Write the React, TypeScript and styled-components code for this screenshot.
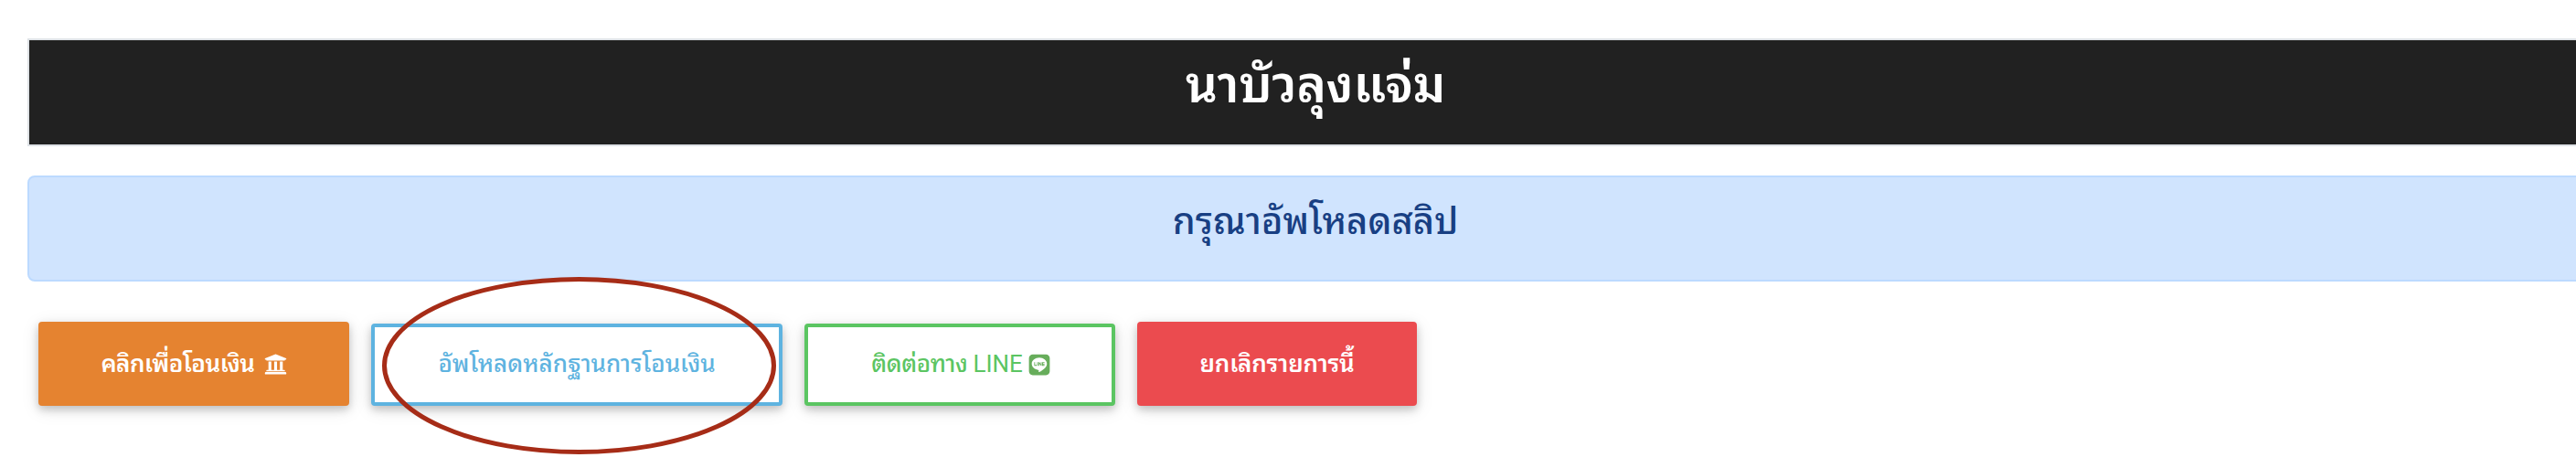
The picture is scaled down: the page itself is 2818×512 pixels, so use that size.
import React from 'react';
import styled, { createGlobalStyle } from 'styled-components';
import { FaUniversity, FaLine } from 'react-icons/fa';

const GlobalStyle = createGlobalStyle`
  * { box-sizing: border-box; }
  body {
    margin: 0;
    background: #fff;
    overflow: hidden;
    font-family: Roboto, "Noto Sans Thai Looped", "Noto Sans Thai", "Noto Sans", sans-serif;
  }
`;

const Page = styled.main`
  position: relative;
  width: 2848px;
  height: 512px;
  padding: 42px 0 0 30px;
`;

const Header = styled.header`
  height: 118px;
  border: 2px solid #dee2e6;
  background: #212121;
  color: #fff;
  text-align: center;
`;

const Title = styled.h1`
  margin: 0;
  font-size: 55px;
  font-weight: 600;
  letter-spacing: -0.2px;
  line-height: 98px;
  white-space: nowrap;
`;

const Alert = styled.section`
  height: 116px;
  margin-top: 32px;
  border: 2px solid #bcdaff;
  border-radius: 8px;
  background: #d0e4fe;
  color: #183f83;
  text-align: center;
`;

const AlertText = styled.h2`
  margin: 0;
  font-size: 40px;
  font-weight: 500;
  line-height: 98px;
  white-space: nowrap;
`;

const Actions = styled.div`
  display: flex;
  align-items: flex-end;
  gap: 24px;
  height: 92px;
  margin: 44px 0 0 12px;
`;

const Label = styled.span<{ $spacing?: number; $weight?: number }>`
  letter-spacing: ${(p) => p.$spacing ?? 0}px;
  font-weight: ${(p) => p.$weight ?? 500};
`;

const Button = styled.button<{ $color: string; $width: number; $outline?: boolean }>`
  display: flex;
  align-items: center;
  justify-content: center;
  width: ${(p) => p.$width}px;
  height: ${(p) => (p.$outline ? 90 : 92)}px;
  padding: 0;
  border: ${(p) => (p.$outline ? `4px solid ${p.$color}` : '0')};
  border-radius: 4px;
  background: ${(p) => (p.$outline ? '#fff' : p.$color)};
  color: ${(p) => (p.$outline ? p.$color : '#fff')};
  box-shadow: 0 4px 10px rgba(0, 0, 0, 0.2), 0 4px 20px rgba(0, 0, 0, 0.1);
  font-family: inherit;
  font-size: 26px;
  white-space: nowrap;

  ${Label} {
    margin-bottom: ${(p) => (p.$outline ? 9 : 6)}px;
  }
`;

const Latin = styled.span`
  letter-spacing: 0;
  font-weight: 400;
`;

const BankIcon = styled(FaUniversity)`
  width: 25px;
  height: 25px;
  margin-left: 10px;
`;

const LineIcon = styled(FaLine)`
  width: 26px;
  height: 26px;
  margin: 0 -3px 0 5px;
  color: #67ad5b;
`;

const Marker = styled.svg`
  position: absolute;
  left: 416px;
  top: 300px;
  pointer-events: none;
`;

export default function App() {
  return (
    <Page>
      <GlobalStyle />
      <Header><Title>นาบัวลุงแจ่ม</Title></Header>
      <Alert><AlertText>กรุณาอัพโหลดสลิป</AlertText></Alert>
      <Actions>
        <Button $color="#e58330" $width={340}><Label $weight={600} $spacing={-0.5}>คลิกเพื่อโอนเงิน</Label><BankIcon /></Button>
        <Button $color="#5eb3e0" $width={450} $outline><Label>อัพโหลดหลักฐานการโอนเงิน</Label></Button>
        <Button $color="#5bc562" $width={340} $outline><Label $spacing={-0.4}>ติดต่อทาง <Latin>LINE</Latin></Label><LineIcon /></Button>
        <Button $color="#eb4b4f" $width={306}><Label $weight={600} $spacing={-0.2}>ยกเลิกรายการนี้</Label></Button>
      </Actions>
      <Marker width="436" height="200" viewBox="0 0 436 200">
        <ellipse cx="217.5" cy="100" rx="213" ry="94.5" fill="none" stroke="#a62c17" strokeWidth="5" />
      </Marker>
    </Page>
  );
}
